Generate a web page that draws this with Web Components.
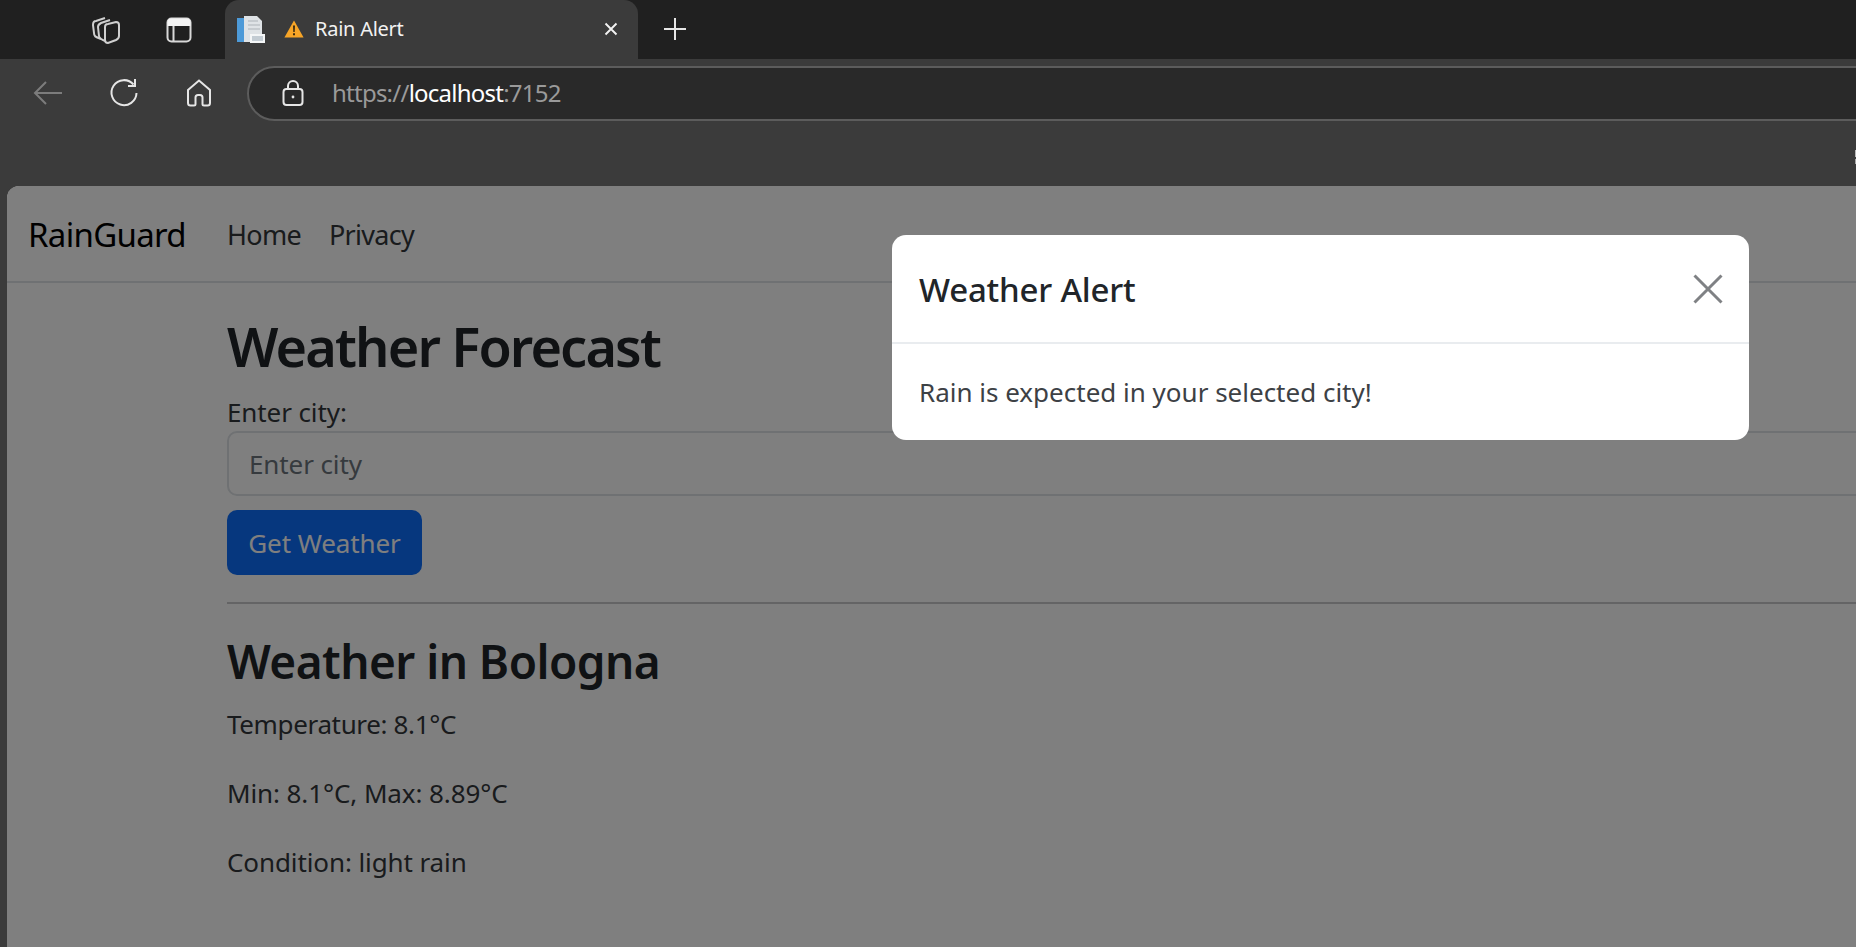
<!DOCTYPE html>
<html>
<head>
<meta charset="utf-8">
<title>Rain Alert</title>
<style>
html, body { margin: 0; height: 100%; overflow: hidden; }
body { background: #3b3b3b; font-family: "Noto Sans", "Liberation Sans", sans-serif; display: flex; flex-direction: column; }
</style>
</head>
<body>
<browser-chrome></browser-chrome>
<page-frame>
  <app-navbar></app-navbar>
  <weather-page></weather-page>
  <alert-modal slot="overlay" heading="Weather Alert">Rain is expected in your selected city!</alert-modal>
</page-frame>

<script>
class BrowserChrome extends HTMLElement {
    constructor() {
        super();
        this.shadowDOM = this.attachShadow({mode: "open"});
    }

    connectedCallback() {
        this.render();
    }

    render() {
        this.shadowDOM.innerHTML = `
        <style>
        :host { display: block; height: 186px; flex: none; color: #fff; position: relative; }
        .strip { height: 59px; background: #202020; display: flex; align-items: center; }
        svg { display: block; flex: none; }
        .stack { margin-left: 91px; }
        .panel { margin-left: 45px; }
        .tab {
            margin-left: 33px;
            width: 413px;
            height: 59px;
            box-sizing: border-box;
            background: #3b3b3b;
            border-radius: 14px 14px 0 0;
            display: flex;
            align-items: center;
            padding: 0 0 2px 11px;
        }
        .tab .warn { margin-left: 19px; }
        .tab .title { margin-left: 11px; font-size: 20px; letter-spacing: -0.25px; color: #f2f2f2; }
        .tab .close { margin-left: auto; margin-right: 20px; }
        .plus { margin: 0 0 2px 25px; }
        .bar { height: 61px; box-sizing: border-box; padding-top: 7px; display: flex; align-items: center; }
        .back { margin-left: 33px; }
        .reload { margin-left: 46px; }
        .home { margin-left: 47px; }
        .url {
            margin-left: 35px;
            flex: 1;
            height: 55px;
            margin-right: -40px;
            box-sizing: border-box;
            background: #292929;
            border: 2px solid #5c5c5c;
            border-radius: 28px;
            display: flex;
            align-items: center;
            padding-left: 33px;
        }
        .text { margin: 0 0 2px 28px; font-size: 24px; letter-spacing: -0.76px; color: #9a9a9a; }
        .text b { font-weight: 400; color: #fff; }
        .clip { position: absolute; right: 0; top: 150px; width: 1px; height: 14px; background: linear-gradient(#b9b9b9 0 50%, #3b3b3b 50% 64%, #a8a8a8 64%); }
        </style>
        <div class="strip">
            <svg class="stack" width="30" height="28" viewBox="0 0 30 28" fill="none" stroke="#cfcfcf" stroke-width="2">
                <path d="M10 23 C4 21 3 20 3 17 L2 9 C2 6 3 5 5 5 L14 2"/>
                <path d="M14 25 C9 23 8 22 8 20 L7 11 C7 9 8 8 10 7 L19 4"/>
                <path d="M14 11 C14 9 15 8 17 8 L25 6 C27 6 28 7 28 9 L28 20 C28 22 27 23 25 24 L17 27 C15 27 14 26 14 24 Z"/>
            </svg>
            <svg class="panel" width="26" height="26" viewBox="0 0 26 26">
                <rect x="1.5" y="1.5" width="23" height="23" rx="4" fill="none" stroke="#d8d8d8" stroke-width="2"/>
                <path d="M1.5 5.5 a4 4 0 0 1 4 -4 h15 a4 4 0 0 1 4 4 v3.5 h-23 Z" fill="#f4f4f4"/>
                <path d="M7.5 9 v15" stroke="#d8d8d8" stroke-width="2"/>
            </svg>
            <div class="tab">
                <svg width="29" height="28" viewBox="0 0 29 28">
                    <path d="M1 3 L8 3 L8 27 L1 27 Z" fill="#4d9ad8"/>
                    <path d="M8 1 L21 1 L26 6 L26 27 L8 27 Z" fill="#dfe3e6"/>
                    <path d="M14 19 H29 V28 H14 Z" fill="#f4f6f7"/>
                    <path d="M16 21 H27 V26 H16 Z" fill="#c3ccd3"/>
                    <path d="M12 6 H22 M12 10 H24 M12 14 H24" stroke="#c6cbcf" stroke-width="2"/>
                </svg>
                <svg class="warn" width="20" height="18" viewBox="0 0 20 18">
                    <path d="M10 0.5 L19.6 17.5 H0.4 Z" fill="#f7a527"/>
                    <path d="M9 5.5 H11 L10.7 12 H9.3 Z M9 13.3 H11 V15.3 H9 Z" fill="#3a2a10"/>
                </svg>
                <span class="title">Rain Alert</span>
                <svg class="close" width="14" height="14" viewBox="0 0 14 14" stroke="#f2f2f2" stroke-width="1.9">
                    <path d="M1.5 1.5 L12.5 12.5 M12.5 1.5 L1.5 12.5"/>
                </svg>
            </div>
            <svg class="plus" width="24" height="24" viewBox="0 0 24 24" stroke="#e6e6e6" stroke-width="2">
                <path d="M12 1 V23 M1 12 H23"/>
            </svg>
        </div>
        <div class="bar">
            <svg class="back" width="30" height="26" viewBox="0 0 30 26" fill="none" stroke="#7c7c7c" stroke-width="2">
                <path d="M29 13 H2 M13 2 L2 13 L13 24"/>
            </svg>
            <svg class="reload" width="30" height="30" viewBox="0 0 30 30" fill="none" stroke="#e6e6e6" stroke-width="2">
                <path d="M24.5 6.5 A12.5 12.5 0 1 0 27.5 15"/>
                <path d="M26 1 V8 H19"/>
            </svg>
            <svg class="home" width="26" height="28" viewBox="0 0 26 28" fill="none" stroke="#e6e6e6" stroke-width="2">
                <path d="M2 11 L13 1.5 L24 11 V24 C24 25.5 23 26.5 21.5 26.5 H18 C17 26.5 16.5 26 16.5 25 V18.5 C16.5 17 15.5 16 14 16 H12 C10.5 16 9.5 17 9.5 18.5 V25 C9.5 26 9 26.5 8 26.5 H4.5 C3 26.5 2 25.5 2 24 Z"/>
            </svg>
            <div class="url">
                <svg width="22" height="26" viewBox="0 0 22 26" fill="none" stroke="#e6e6e6" stroke-width="2">
                    <rect x="1.5" y="9" width="19" height="16" rx="3"/>
                    <path d="M6 9 V6 A5 5 0 0 1 16 6 V9"/>
                    <circle cx="11" cy="17" r="1.4" fill="#e6e6e6" stroke="none"/>
                </svg>
                <span class="text">https://<b>localhost</b>:7152</span>
            </div>
        </div>
        <div class="clip"></div>
        `;
    }
}

class PageFrame extends HTMLElement {
    constructor() {
        super();
        this.shadowDOM = this.attachShadow({mode: "open"});
    }

    connectedCallback() {
        this.shadowDOM.innerHTML = `
        <style>
        :host {
            display: block;
            flex: 1;
            min-height: 0;
            margin-left: 7px;
            position: relative;
            background: #fff;
            border-radius: 12px 0 0 0;
            overflow: hidden;
        }
        .backdrop { position: absolute; inset: 0; background: rgba(0, 0, 0, .5); }
        .overlay { position: absolute; left: 885px; top: 49px; width: 857px; }
        </style>
        <slot></slot>
        <div class="backdrop"></div>
        <div class="overlay"><slot name="overlay"></slot></div>
        `;
    }
}

class AppNavbar extends HTMLElement {
    constructor() {
        super();
        this.shadowDOM = this.attachShadow({mode: "open"});
    }

    connectedCallback() {
        this.shadowDOM.innerHTML = `
        <style>
        :host {
            display: flex;
            align-items: center;
            height: 97px;
            box-sizing: border-box;
            border-bottom: 2px solid #dee2e6;
            padding: 2px 0 0 21px;
        }
        .brand { font-size: 33px; letter-spacing: -0.7px; color: #000; width: 199px; }
        a { font-size: 27px; letter-spacing: -0.72px; color: #33373b; text-decoration: none; margin-right: 28px; }
        </style>
        <span class="brand">RainGuard</span>
        <a>Home</a>
        <a>Privacy</a>
        `;
    }
}

class WeatherPage extends HTMLElement {
    constructor() {
        super();
        this.shadowDOM = this.attachShadow({mode: "open"});
    }

    connectedCallback() {
        this.shadowDOM.innerHTML = `
        <style>
        :host { display: block; padding: 25px 0 0 220px; color: #33373b; font-size: 26px; letter-spacing: -0.1px; }
        h1, h2 { color: #212529; font-weight: 600; }
        h1 { margin: 0; font-size: 54px; line-height: 76px; letter-spacing: -1.85px; }
        h2 { margin: 25px 0 0; font-size: 46px; line-height: 64px; letter-spacing: -0.55px; }
        label { display: block; line-height: 37px; margin-top: 10px; }
        .input {
            height: 65px;
            margin-right: -40px;
            box-sizing: border-box;
            border: 2px solid #dee2e6;
            border-radius: 10px;
            background: #fff;
            padding: 0 0 0 20px;
            display: flex;
            align-items: center;
            color: #6c757d;
        }
        .btn {
            display: flex;
            align-items: center;
            justify-content: center;
            width: 195px;
            height: 65px;
            margin-top: 14px;
            border-radius: 10px;
            background: #0d6efd;
            color: #fff;
        }
        hr { border: 0; height: 2px; background: #c8c9ca; margin: 27px -40px 0 0; }
        p { margin: 0; height: 69px; line-height: 40px; }
        h2 + p { margin-top: 11px; letter-spacing: -0.35px; }
        </style>
        <h1>Weather Forecast</h1>
        <label>Enter city:</label>
        <div class="input">Enter city</div>
        <div class="btn">Get Weather</div>
        <hr>
        <h2>Weather in Bologna</h2>
        <p>Temperature: 8.1°C</p>
        <p>Min: 8.1°C, Max: 8.89°C</p>
        <p>Condition: light rain</p>
        `;
    }
}

class AlertModal extends HTMLElement {
    constructor() {
        super();
        this.shadowDOM = this.attachShadow({mode: "open"});
    }

    connectedCallback() {
        this.shadowDOM.innerHTML = `
        <style>
        :host { display: block; background: #fff; border-radius: 14px; color: #212529; overflow: hidden; }
        header {
            height: 109px;
            box-sizing: border-box;
            border-bottom: 2px solid #e9ecef;
            padding: 0 26px 0 27px;
            display: flex;
            align-items: center;
            justify-content: space-between;
        }
        h5 { margin: 2px 0 0; font-size: 33px; font-weight: 500; letter-spacing: -0.2px; }
        .body { height: 96px; box-sizing: border-box; padding: 0 27px; display: flex; align-items: center; font-size: 26px; color: #3d4145; }
        svg { display: block; }
        </style>
        <header>
            <h5>${this.getAttribute("heading")}</h5>
            <svg width="30" height="30" viewBox="0 0 30 30" stroke="#7f8184" stroke-width="3"><path d="M1.5 1.5 L28.5 28.5 M28.5 1.5 L1.5 28.5"/></svg>
        </header>
        <div class="body"><slot></slot></div>
        `;
    }
}

customElements.define("browser-chrome", BrowserChrome);
customElements.define("page-frame", PageFrame);
customElements.define("app-navbar", AppNavbar);
customElements.define("weather-page", WeatherPage);
customElements.define("alert-modal", AlertModal);
</script>
</body>
</html>
